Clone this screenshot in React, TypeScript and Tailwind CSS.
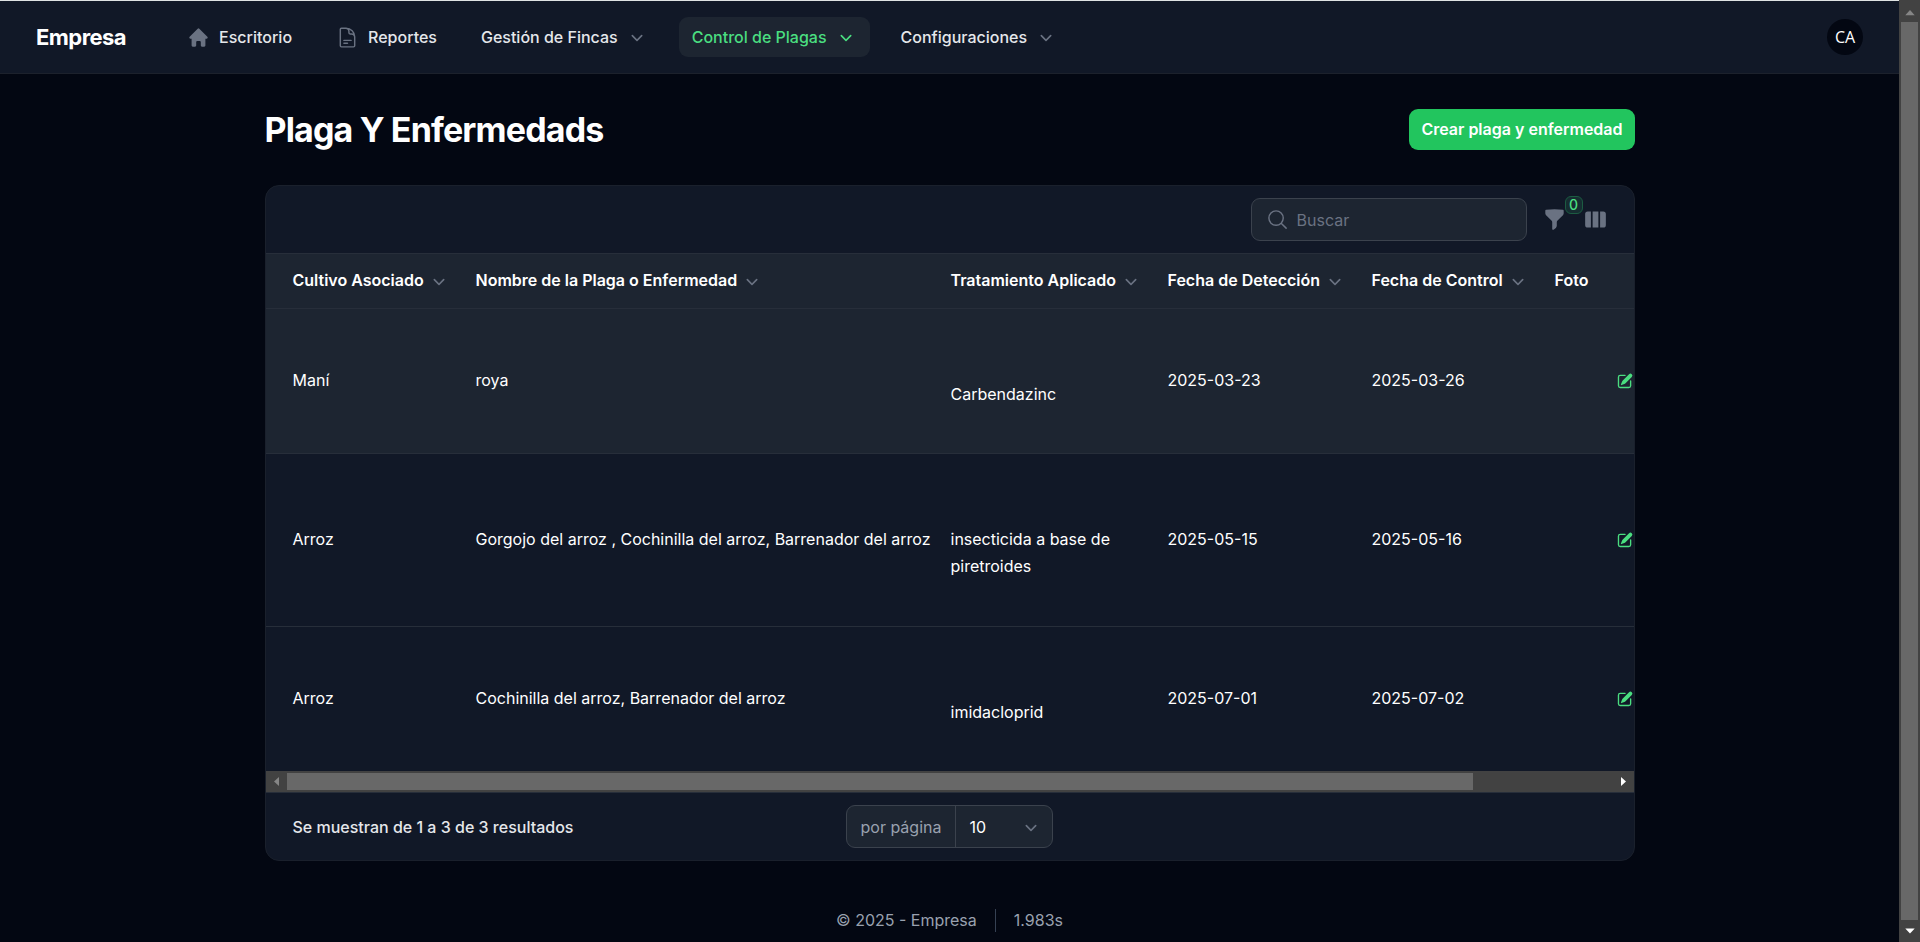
import React from "react";
import { HiOutlineDocumentText, HiOutlineMagnifyingGlass } from "react-icons/hi2";

const paths = {
  home: "M9.293 2.293a1 1 0 0 1 1.414 0l7 7A1 1 0 0 1 17 11h-1v6a1 1 0 0 1-1 1h-2a1 1 0 0 1-1-1v-3a1 1 0 0 0-1-1H9a1 1 0 0 0-1 1v3a1 1 0 0 1-1 1H5a1 1 0 0 1-1-1v-6H3a1 1 0 0 1-.707-1.707l7-7Z",
  funnel:
    "M2.628 1.601C5.028 1.206 7.49 1 10 1s4.973.206 7.372.601a.75.75 0 0 1 .628.74v2.288a2.25 2.25 0 0 1-.659 1.59l-4.682 4.683a2.25 2.25 0 0 0-.659 1.59v3.037c0 .684-.31 1.33-.844 1.757l-1.937 1.55A.75.75 0 0 1 8 18.25v-5.757a2.25 2.25 0 0 0-.659-1.591L2.659 6.22A2.25 2.25 0 0 1 2 4.629V2.34a.75.75 0 0 1 .628-.74Z",
  columns:
    "M14 17h2.75A2.25 2.25 0 0 0 19 14.75v-9.5A2.25 2.25 0 0 0 16.75 3H14v14ZM12.5 3h-5v14h5V3ZM3.25 3H6v14H3.25A2.25 2.25 0 0 1 1 14.75v-9.5A2.25 2.25 0 0 1 3.25 3Z",
  chevron:
    "M5.22 8.22a.75.75 0 0 1 1.06 0L10 11.94l3.72-3.72a.75.75 0 1 1 1.06 1.06l-4.25 4.25a.75.75 0 0 1-1.06 0L5.22 9.28a.75.75 0 0 1 0-1.06Z",
};

function Icon({ name, className = "" }: { name: keyof typeof paths; className?: string }) {
  return (
    <svg viewBox="0 0 20 20" fill="currentColor" aria-hidden="true" className={`shrink-0 ${className}`}>
      <path fillRule="evenodd" clipRule="evenodd" d={paths[name]} />
    </svg>
  );
}

function EditIcon() {
  return (
    <svg viewBox="0 0 20 20" fill="currentColor" aria-hidden="true" className="size-[18px]">
      <path d="m5.433 13.917 1.262-3.155A4 4 0 0 1 7.58 9.42l6.92-6.918a2.121 2.121 0 0 1 3 3l-6.92 6.918c-.383.383-.84.685-1.343.886l-3.154 1.262a.5.5 0 0 1-.65-.65Z" />
      <path d="M3.5 5.75c0-.69.56-1.25 1.25-1.25H10A.75.75 0 0 0 10 3H4.75A2.75 2.75 0 0 0 2 5.75v9.5A2.75 2.75 0 0 0 4.75 18h9.5A2.75 2.75 0 0 0 17 15.25V10a.75.75 0 0 0-1.5 0v5.25c0 .69-.56 1.25-1.25 1.25h-9.5c-.69 0-1.25-.56-1.25-1.25v-9.5Z" />
    </svg>
  );
}

const menus = [
  { label: "Gestión de Fincas", active: false },
  { label: "Control de Plagas", active: true },
  { label: "Configuraciones", active: false },
];

function TopBar() {
  return (
    <header className="flex h-[73px] items-center border-b border-[#1c212c] bg-[#111827] px-9">
      <a href="#" className="mr-12 text-[22px] leading-7 font-bold tracking-tight text-white">
        Empresa
      </a>
      <nav className="flex grow items-center gap-[18px] text-base leading-[22px] font-medium text-gray-200">
        <a href="#" className="flex items-center gap-[9px] rounded-[9px] px-[13px] py-[9px]">
          <Icon name="home" className="size-[23px] text-gray-500" />
          Escritorio
        </a>
        <a href="#" className="flex items-center gap-[9px] rounded-[9px] px-[13px] py-[9px]">
          <HiOutlineDocumentText className="size-[23px] text-gray-500" />
          Reportes
        </a>
        {menus.map((m) => (
          <button
            key={m.label}
            type="button"
            className={
              m.active
                ? "flex items-center gap-2 rounded-[9px] bg-[#1d2531] px-[13px] py-[9px] text-[#4ade80]"
                : "flex items-center gap-2 rounded-[9px] px-[13px] py-[9px]"
            }
          >
            {m.label}
            <Icon name="chevron" className={m.active ? "size-[22px]" : "size-[22px] text-gray-500"} />
          </button>
        ))}
      </nav>
      <button type="button" className="size-9 rounded-full bg-[#030712] font-['Open_Sans',sans-serif] text-base text-white">
        CA
      </button>
    </header>
  );
}

const columns = [
  { label: "Cultivo Asociado", sortable: true, width: "w-[197px]" },
  { label: "Nombre de la Plaga o Enfermedad", sortable: true, width: "w-[475px]" },
  { label: "Tratamiento Aplicado", sortable: true, width: "w-[217px]" },
  { label: "Fecha de Detección", sortable: true, width: "w-[204px]" },
  { label: "Fecha de Control", sortable: true, width: "w-[183px]" },
  { label: "Foto", sortable: false, width: "w-[61px]" },
];

const rows = [
  { crop: "Maní", pest: "roya", treatment: ["Carbendazinc"], found: "2025-03-23", control: "2025-03-26", row: "h-[145px] bg-[#1d2531]" },
  {
    crop: "Arroz",
    pest: "Gorgojo del arroz , Cochinilla del arroz, Barrenador del arroz",
    treatment: ["insecticida a base de", "piretroides"],
    found: "2025-05-15",
    control: "2025-05-16",
    row: "h-[173px]",
  },
  {
    crop: "Arroz",
    pest: "Cochinilla del arroz, Barrenador del arroz",
    treatment: ["imidacloprid"],
    found: "2025-07-01",
    control: "2025-07-02",
    row: "h-[145px]",
  },
];

function PestTable() {
  return (
    <div className="overflow-hidden">
      <table className="w-[1527px] table-fixed border-collapse text-left text-base leading-[27px] text-white">
        <thead className="bg-[#1d2531]">
          <tr className="h-[54px] border-b border-[#272e3a]">
            {columns.map((c) => (
              <th key={c.label} scope="col" className={`px-[13px] py-0 font-semibold first:pl-[27px] ${c.width}`}>
                {c.sortable ? (
                  <button type="button" className="flex items-center gap-1 whitespace-nowrap">
                    {c.label}
                    <Icon name="chevron" className="size-[22px] text-gray-500" />
                  </button>
                ) : (
                  c.label
                )}
              </th>
            ))}
            <th scope="col" aria-label="Acciones" />
          </tr>
        </thead>
        <tbody>
          {rows.map((r) => (
            <tr key={r.found} className={`border-b border-[#272e3a] last:border-b-0 ${r.row}`}>
              <td className="px-[13px] first:pl-[27px]">{r.crop}</td>
              <td className="px-[13px] whitespace-nowrap">{r.pest}</td>
              <td className="px-[13px] pt-[27px]">
                {r.treatment.map((t) => (
                  <p key={t}>{t}</p>
                ))}
              </td>
              <td className="px-[13px]">{r.found}</td>
              <td className="px-[13px]">{r.control}</td>
              <td />
              <td className="px-[13px]">
                <button type="button" aria-label="Editar" className="flex text-[#4ade80]">
                  <EditIcon />
                </button>
              </td>
            </tr>
          ))}
        </tbody>
      </table>
    </div>
  );
}

function HorizontalScrollbar() {
  return (
    <div className="flex h-[21px] items-center bg-[#424242]" aria-hidden="true">
      <svg viewBox="0 0 21 21" className="size-[21px] shrink-0 fill-[#868686]">
        <path d="M13 6v9l-5-4.5z" />
      </svg>
      <div className="flex grow">
        <div className="h-[17px] w-[89.5%] bg-[#686868]" />
      </div>
      <svg viewBox="0 0 21 21" className="size-[21px] shrink-0 fill-white">
        <path d="M8 6v9l5-4.5z" />
      </svg>
    </div>
  );
}

function VerticalScrollbar() {
  return (
    <div className="sticky top-0 flex h-screen w-[21px] shrink-0 flex-col items-center bg-[#424242]" aria-hidden="true">
      <svg viewBox="0 0 21 21" className="size-[22px] shrink-0 fill-[#868686]">
        <path d="M6 14.5h9l-4.5-5z" />
      </svg>
      <div className="w-[17px] grow bg-[#686868]" />
      <svg viewBox="0 0 21 21" className="size-[22px] shrink-0 fill-white">
        <path d="M6 8h9l-4.5 5z" />
      </svg>
    </div>
  );
}

export default function App() {
  return (
    <div className="flex min-h-screen bg-[#030712] font-['Inter',sans-serif]">
      <div className="min-w-0 grow border-t border-[#dfe3e3]">
        <TopBar />
        <main className="mx-auto flex max-w-[1442px] flex-col gap-[35px] px-9 pt-[35px]">
          <div className="flex items-center justify-between">
            <h1 className="text-[34px] leading-[41px] font-bold tracking-tight text-white">Plaga Y Enfermedads</h1>
            <button type="button" className="rounded-[9px] bg-[#22c55e] px-3 py-[9px] text-base leading-[23px] font-semibold text-white">
              Crear plaga y enfermedad
            </button>
          </div>
          <section className="overflow-hidden rounded-[14px] border border-[#1a202c] bg-[#111827]">
            <div className="flex h-[68px] items-center justify-end gap-4 border-b border-[#272e3a] px-[27px]">
              <label className="flex h-[43px] w-[276px] items-center gap-2 rounded-[9px] border border-[#3b424d] bg-[#1d2531] px-[14px]">
                <HiOutlineMagnifyingGlass className="size-[23px] shrink-0 text-gray-500" />
                <input type="search" aria-label="Buscar" placeholder="Buscar" className="w-full bg-transparent text-base text-white outline-none placeholder:text-gray-500" />
              </label>
              <div className="flex items-center gap-[18px]">
                <button type="button" aria-label="Filtros" className="relative text-gray-500">
                  <Icon name="funnel" className="size-[23px]" />
                  <span className="absolute -top-3 left-[22px] flex size-[18px] items-center justify-center rounded-md border border-[#1c5c42] bg-[#162d31] text-[14px] leading-4 font-medium text-[#4ade80]">
                    0
                  </span>
                </button>
                <button type="button" aria-label="Columnas" className="text-gray-500">
                  <Icon name="columns" className="size-[23px]" />
                </button>
              </div>
            </div>
            <PestTable />
            <HorizontalScrollbar />
            <div className="grid h-[68px] grid-cols-[1fr_auto_1fr] items-center border-t border-[#272e3a] px-[27px]">
              <p className="text-base font-medium text-gray-200">Se muestran de 1 a 3 de 3 resultados</p>
              <label className="flex h-[43px] items-center rounded-[9px] border border-[#3b424d] bg-[#1d2531] text-base">
                <span className="flex h-full items-center border-r border-[#3b424d] px-[14px] text-gray-400">por página</span>
                <span className="relative flex items-center">
                  <select className="w-24 appearance-none bg-transparent pl-[13px] text-white outline-none" defaultValue="10">
                    <option value="10">10</option>
                  </select>
                  <Icon name="chevron" className="pointer-events-none absolute right-2.5 size-[22px] text-gray-500" />
                </span>
              </label>
            </div>
          </section>
        </main>
        <footer className="flex items-center justify-center gap-[18px] pt-12 text-base leading-[23px] text-gray-400">
          <span>© 2025 - Empresa</span>
          <span className="border-l border-gray-700 pl-[18px]">1.983s</span>
        </footer>
      </div>
      <VerticalScrollbar />
    </div>
  );
}
